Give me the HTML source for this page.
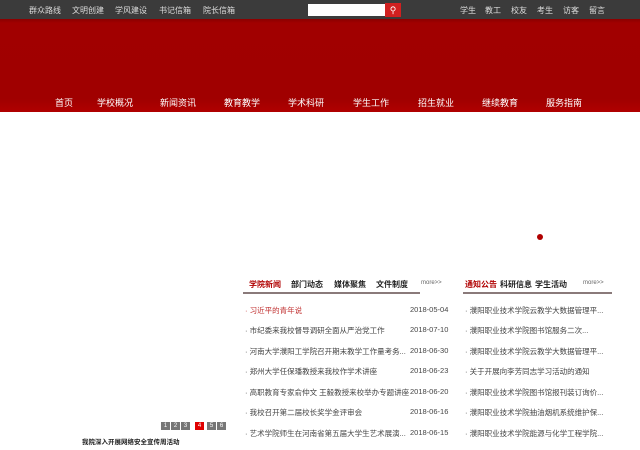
<!DOCTYPE html>
<html><head><meta charset="utf-8"><style>
*{margin:0;padding:0;box-sizing:border-box}
body{width:640px;height:450px;overflow:hidden;background:#fff;font-family:"Liberation Sans","Noto Sans CJK SC",sans-serif;font-size:8px;color:#333;position:relative}
.top{position:absolute;left:0;top:0;width:640px;height:19px;background:#3b3b3b;color:#ddd}
.top span{position:absolute;top:5px;font-size:8px}
.red{position:absolute;left:0;top:19px;width:640px;height:93px;background:linear-gradient(#8a0000 0,#a10000 4px,#a00000 80px,#b00000 93px)}
.nav span{position:absolute;top:96px;color:#fff;font-size:9px}
.a{position:absolute;white-space:nowrap}
.hd{font-weight:bold;font-size:8px;color:#222}
.row{font-size:7.5px;color:#444}
.pg{position:absolute;top:422px;width:9px;height:8px;background:#777;color:#fff;font-size:6px;text-align:center;line-height:8px}
</style></head><body>
<div class="top">
<span style="left:29px">群众路线</span><span style="left:72px">文明创建</span><span style="left:115px">学风建设</span><span style="left:159px">书记信箱</span><span style="left:203px">院长信箱</span>
<div style="position:absolute;left:308px;top:4px;width:77px;height:12px;background:#fff"></div>
<div style="position:absolute;left:385px;top:3px;width:16px;height:14px;background:#d02020;color:#fff;font-size:9px;text-align:center;line-height:14px">&#9906;</div>
<span style="left:460px">学生</span><span style="left:485px">教工</span><span style="left:511px">校友</span><span style="left:537px">考生</span><span style="left:563px">访客</span><span style="left:589px">留言</span>
</div>
<div class="red"></div>
<div class="nav">
<span style="left:55px">首页</span><span style="left:97px">学校概况</span><span style="left:160px">新闻资讯</span><span style="left:224px">教育教学</span><span style="left:288px">学术科研</span><span style="left:353px">学生工作</span><span style="left:418px">招生就业</span><span style="left:482px">继续教育</span><span style="left:546px">服务指南</span>
</div>
<div class="a" style="left:537px;top:234px;width:6px;height:6px;border-radius:50%;background:#b00000"></div>

<div class="a hd" style="left:249px;top:279px;color:#b00000">学院新闻</div>
<div class="a hd" style="left:291px;top:279px">部门动态</div>
<div class="a hd" style="left:334px;top:279px">媒体聚焦</div>
<div class="a hd" style="left:376px;top:279px">文件制度</div>
<div class="a" style="left:421px;top:280px;font-size:6px;color:#666">more&gt;&gt;</div>
<div class="a" style="left:243px;top:292px;width:177px;height:2px;background:#8a7a7a"></div>

<div class="a hd" style="left:465px;top:279px;color:#b00000">通知公告</div>
<div class="a hd" style="left:500px;top:279px">科研信息</div>
<div class="a hd" style="left:535px;top:279px">学生活动</div>
<div class="a" style="left:583px;top:280px;font-size:6px;color:#666">more&gt;&gt;</div>
<div class="a" style="left:463px;top:292px;width:149px;height:2px;background:#8a7a7a"></div>

<div class="a row" style="left:245px;top:305px;color:#c03030">· 习近平的青年说</div>
<div class="a row" style="left:245px;top:325px">· 市纪委来我校督导调研全面从严治党工作</div>
<div class="a row" style="left:245px;top:346px">· 河南大学濮阳工学院召开期末教学工作量考务...</div>
<div class="a row" style="left:245px;top:366px">· 郑州大学任保璠教授来我校作学术讲座</div>
<div class="a row" style="left:245px;top:387px">· 高职教育专家俞仲文 王毅教授来校举办专题讲座</div>
<div class="a row" style="left:245px;top:407px">· 我校召开第二届校长奖学金评审会</div>
<div class="a row" style="left:245px;top:428px">· 艺术学院师生在河南省第五届大学生艺术展演...</div>
<div class="a row" style="left:410px;top:305px">2018-05-04</div>
<div class="a row" style="left:410px;top:325px">2018-07-10</div>
<div class="a row" style="left:410px;top:346px">2018-06-30</div>
<div class="a row" style="left:410px;top:366px">2018-06-23</div>
<div class="a row" style="left:410px;top:387px">2018-06-20</div>
<div class="a row" style="left:410px;top:407px">2018-06-16</div>
<div class="a row" style="left:410px;top:428px">2018-06-15</div>

<div class="a row" style="left:465px;top:305px">· 濮阳职业技术学院云教学大数据管理平...</div>
<div class="a row" style="left:465px;top:325px">· 濮阳职业技术学院图书馆服务二次...</div>
<div class="a row" style="left:465px;top:346px">· 濮阳职业技术学院云教学大数据管理平...</div>
<div class="a row" style="left:465px;top:366px">· 关于开展向李芳同志学习活动的通知</div>
<div class="a row" style="left:465px;top:387px">· 濮阳职业技术学院图书馆报刊装订询价...</div>
<div class="a row" style="left:465px;top:407px">· 濮阳职业技术学院抽油烟机系统维护保...</div>
<div class="a row" style="left:465px;top:428px">· 濮阳职业技术学院能源与化学工程学院...</div>

<div class="pg" style="left:161px">1</div><div class="pg" style="left:171px">2</div><div class="pg" style="left:181px">3</div><div class="pg" style="left:195px;background:#e00000">4</div><div class="pg" style="left:207px">5</div><div class="pg" style="left:217px">6</div>
<div class="a" style="left:82px;top:436px;font-size:6.5px;font-weight:bold;color:#222">我院深入开展网络安全宣传周活动</div>
</body></html>
